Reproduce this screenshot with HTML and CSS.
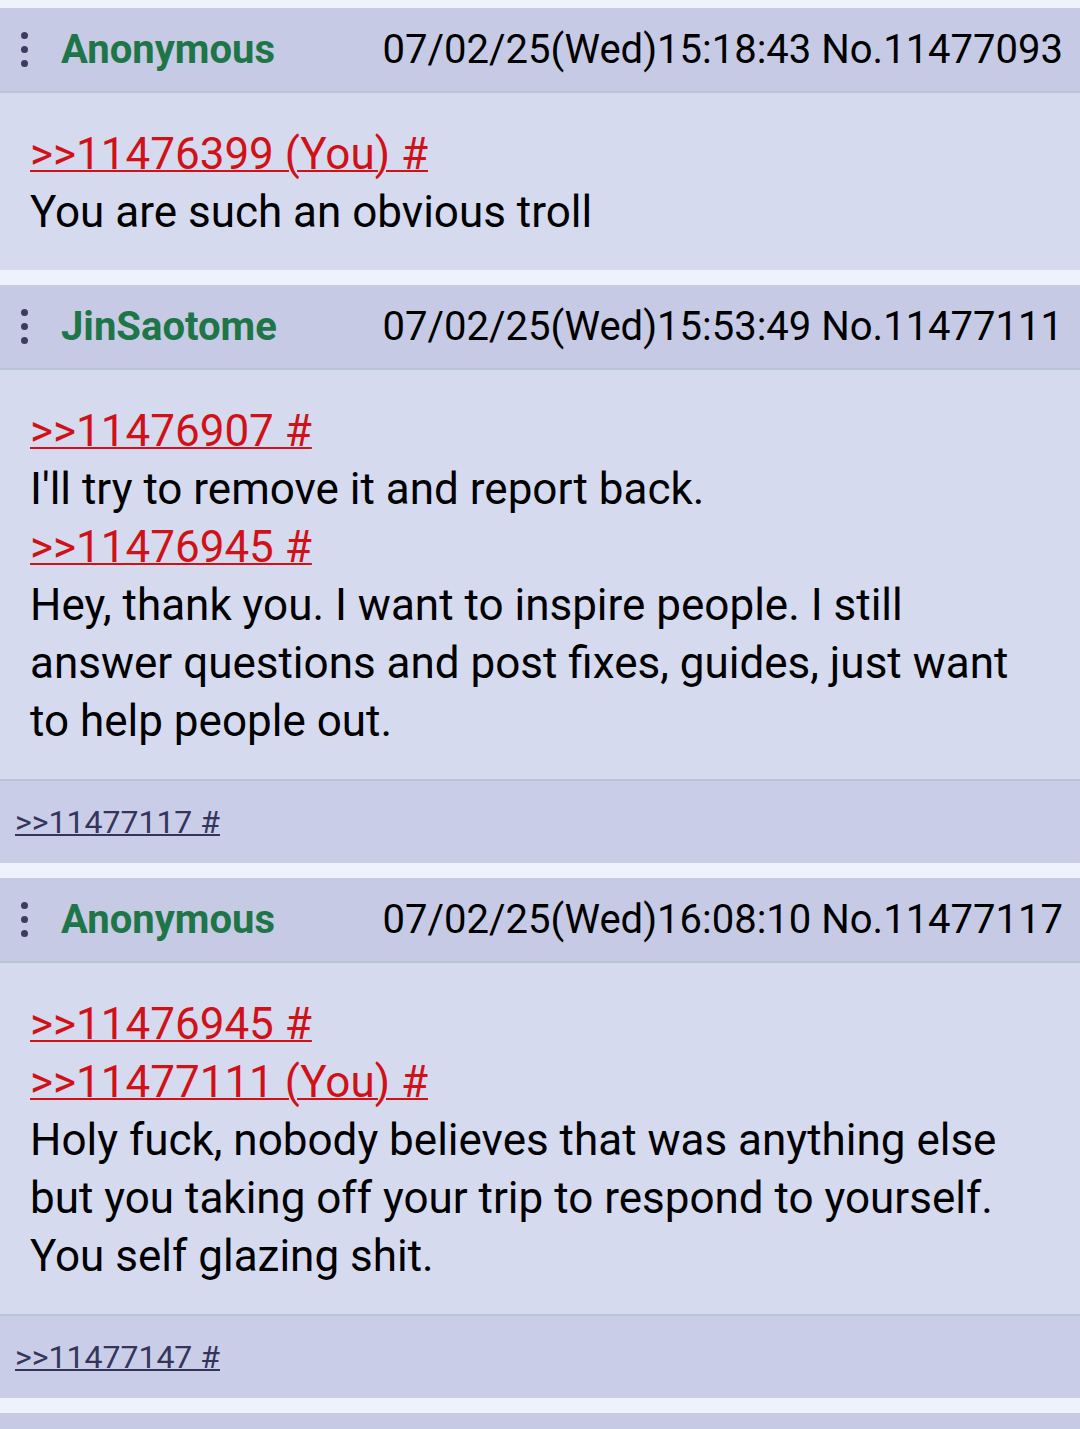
FILE: index.html
```html
<!DOCTYPE html>
<html lang="en">
<head>
  <meta charset="UTF-8">
  <title>Thread</title>
  <link rel="stylesheet" href="styles.css">
</head>
<body>

  <div class="post">
    <div class="postHeader">
      <span class="menuDots"><i></i><i></i><i></i></span>
      <span class="posterName">Anonymous</span>
      <span class="postInfo">07/02/25(Wed)15:18:43 No.11477093</span>
    </div>
    <div class="postBody">
      <a class="quoteLink" href="#">&gt;&gt;11476399 (You) #</a><br>
      You are such an obvious troll
    </div>
  </div>

  <div class="post">
    <div class="postHeader">
      <span class="menuDots"><i></i><i></i><i></i></span>
      <span class="posterName">JinSaotome</span>
      <span class="postInfo">07/02/25(Wed)15:53:49 No.11477111</span>
    </div>
    <div class="postBody">
      <a class="quoteLink" href="#">&gt;&gt;11476907 #</a><br>
      I'll try to remove it and report back.<br>
      <a class="quoteLink" href="#">&gt;&gt;11476945 #</a><br>
      Hey, thank you. I want to inspire people. I still answer questions and post fixes, guides, just want to help people out.
    </div>
    <div class="replies">
      <a class="replyLink" href="#">&gt;&gt;11477117 #</a>
    </div>
  </div>

  <div class="post">
    <div class="postHeader">
      <span class="menuDots"><i></i><i></i><i></i></span>
      <span class="posterName">Anonymous</span>
      <span class="postInfo">07/02/25(Wed)16:08:10 No.11477117</span>
    </div>
    <div class="postBody">
      <a class="quoteLink" href="#">&gt;&gt;11476945 #</a><br>
      <a class="quoteLink" href="#">&gt;&gt;11477111 (You) #</a><br>
      Holy fuck, nobody believes that was anything else but you taking off your trip to respond to yourself. You self glazing shit.
    </div>
    <div class="replies">
      <a class="replyLink" href="#">&gt;&gt;11477147 #</a>
    </div>
  </div>

  <div class="post">
    <div class="postHeader"></div>
  </div>

</body>
</html>
```

FILE: styles.css
```css
body {
  margin: 0;
  padding-top: 8px;
  background-color: #eef2fd;
  font-family: Roboto, "Noto Sans", sans-serif;
  color: #000;
}
.post {
  margin-bottom: 15px;
  background-color: #d5daef;
}
.postHeader {
  display: flex;
  align-items: center;
  height: 83px;
  padding: 0 17px 0 21px;
  background-color: #c6cae4;
  border-bottom: 2px solid #b8c4d8;
}
.menuDots {
  display: flex;
  flex-direction: column;
  gap: 7px;
  margin-right: 33px;
}
.menuDots i {
  width: 7px;
  height: 7px;
  border-radius: 50%;
  background-color: #3c3c60;
}
.posterName {
  color: #1e7548;
  font-weight: bold;
  font-size: 40px;
}
.postInfo {
  margin-left: auto;
  font-size: 40px;
}
.postBody {
  padding: 32px 30px 29px 30px;
  font-size: 44px;
  line-height: 58px;
}
.quoteLink {
  color: #d01218;
  text-decoration: underline;
  text-decoration-thickness: 2px;
}
.replies {
  display: flex;
  align-items: center;
  height: 82px;
  padding-left: 15px;
  background-color: #c9cde7;
  border-top: 2px solid #b8c4d8;
}
.replyLink {
  color: #35355c;
  font-size: 32px;
  text-decoration-thickness: 2px;
}
```
